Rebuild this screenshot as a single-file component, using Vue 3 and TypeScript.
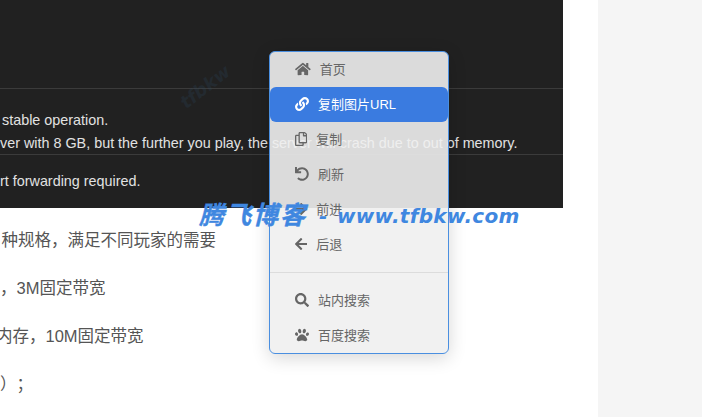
<script setup lang="ts">
interface Item { label: string; vb: string; d: string; active?: boolean; divider?: boolean }
const items: Item[] = [
  { label: '首页', vb: '0 0 576 512', d: 'M280.37 148.26L96 300.11V464a16 16 0 0 0 16 16l112.06-.29a16 16 0 0 0 15.92-16V368a16 16 0 0 1 16-16h64a16 16 0 0 1 16 16v95.64a16 16 0 0 0 16 16.05L464 480a16 16 0 0 0 16-16V300L295.67 148.26a12.19 12.19 0 0 0-15.3 0zM571.6 251.47L488 182.56V44.05a12 12 0 0 0-12-12h-56a12 12 0 0 0-12 12v72.61L318.47 43a48 48 0 0 0-61 0L4.34 251.47a12 12 0 0 0-1.6 16.9l25.5 31A12 12 0 0 0 45.15 301l235.22-193.74a12.19 12.19 0 0 1 15.3 0L530.9 301a12 12 0 0 0 16.9-1.6l25.5-31a12 12 0 0 0-1.7-16.93z' },
  { label: '复制图片URL', active: true, vb: '0 0 512 512', d: 'M326.612 185.391c59.747 59.809 58.927 155.698.36 214.59-.11.12-.24.25-.36.37l-67.2 67.2c-59.27 59.27-155.699 59.262-214.96 0-59.27-59.26-59.27-155.7 0-214.96l37.106-37.106c9.84-9.84 26.786-3.3 27.294 10.606.648 17.722 3.826 35.527 9.69 52.721 1.986 5.822.567 12.262-3.783 16.612l-13.087 13.087c-28.026 28.026-28.905 73.66-1.155 101.96 28.024 28.579 74.086 28.749 102.325.51l67.2-67.19c28.191-28.191 28.073-73.757 0-101.83-3.701-3.694-7.429-6.564-10.341-8.569a16.037 16.037 0 0 1-6.947-12.606c-.396-10.567 3.348-21.456 11.698-29.806l21.054-21.055c5.521-5.521 14.182-6.199 20.584-1.731a152.482 152.482 0 0 1 20.522 17.197zM467.547 44.449c-59.261-59.262-155.69-59.27-214.96 0l-67.2 67.2c-.12.12-.25.25-.36.37-58.566 58.892-59.387 154.781.36 214.59a152.454 152.454 0 0 0 20.521 17.196c6.402 4.468 15.064 3.789 20.584-1.731l21.054-21.055c8.35-8.35 12.094-19.239 11.698-29.806a16.037 16.037 0 0 0-6.947-12.606c-2.912-2.005-6.64-4.875-10.341-8.569-28.073-28.073-28.191-73.639 0-101.83l67.2-67.19c28.239-28.239 74.3-28.069 102.325.51 27.75 28.3 26.872 73.934-1.155 101.96l-13.087 13.087c-4.35 4.35-5.769 10.79-3.783 16.612 5.864 17.194 9.042 34.999 9.69 52.721.509 13.906 17.454 20.446 27.294 10.606l37.106-37.106c59.271-59.259 59.271-155.699.001-214.959z' },
  { label: '复制', vb: '0 0 448 512', d: 'M433.941 65.941l-51.882-51.882A48 48 0 0 0 348.118 0H176c-26.51 0-48 21.49-48 48v48H48c-26.51 0-48 21.49-48 48v320c0 26.51 21.49 48 48 48h224c26.51 0 48-21.49 48-48v-48h80c26.51 0 48-21.49 48-48V99.882a48 48 0 0 0-14.059-33.941zM266 464H54a6 6 0 0 1-6-6V150a6 6 0 0 1 6-6h74v224c0 26.51 21.49 48 48 48h96v42a6 6 0 0 1-6 6zm128-96H182a6 6 0 0 1-6-6V54a6 6 0 0 1 6-6h106v88c0 13.255 10.745 24 24 24h88v202a6 6 0 0 1-6 6zm6-256h-64V48h9.632c1.591 0 3.117.632 4.243 1.757l48.368 48.368a6 6 0 0 1 1.757 4.243V112z' },
  { label: '刷新', vb: '0 0 512 512', d: 'M212.333 224.333H12c-6.627 0-12-5.373-12-12V12C0 5.373 5.373 0 12 0h48c6.627 0 12 5.373 12 12v78.112C117.773 39.279 184.26 7.47 258.175 8.007c136.906.994 246.448 111.623 246.157 248.532C504.041 393.258 393.12 504 256.333 504c-64.089 0-122.496-24.313-166.51-64.215-5.099-4.622-5.334-12.554-.467-17.42l33.967-33.967c4.474-4.474 11.662-4.717 16.401-.525C170.76 415.336 211.58 432 256.333 432c97.268 0 176-78.716 176-176 0-97.267-78.716-176-176-176-58.496 0-110.28 28.476-142.274 72.333h98.274c6.627 0 12 5.373 12 12v48c0 6.627-5.373 12-12 12z' },
  { label: '前进', vb: '0 0 448 512', d: 'M190.5 66.9l22.2-22.2c9.4-9.4 24.6-9.4 33.9 0L441 239c9.4 9.4 9.4 24.6 0 33.9L246.6 467.3c-9.4 9.4-24.6 9.4-33.9 0l-22.2-22.2c-9.5-9.5-9.3-25 .4-34.3L311.4 296H24c-13.3 0-24-10.7-24-24v-32c0-13.3 10.7-24 24-24h287.4L190.9 101.2c-9.8-9.3-10-24.8-.4-34.3z' },
  { label: '后退', vb: '0 0 448 512', divider: true, d: 'M257.5 445.1l-22.2 22.2c-9.4 9.4-24.6 9.4-33.9 0L7 273c-9.4-9.4-9.4-24.6 0-33.9L201.4 44.7c9.4-9.4 24.6-9.4 33.9 0l22.2 22.2c9.5 9.5 9.3 25-.4 34.3L136.6 216H424c13.3 0 24 10.7 24 24v32c0 13.3-10.7 24-24 24H136.6l120.5 114.8c9.8 9.3 10 24.8.4 34.3z' },
  { label: '站内搜索', vb: '0 0 512 512', d: 'M505 442.7L405.3 343c-4.5-4.5-10.6-7-17-7H372c27.6-35.3 44-79.7 44-128C416 93.1 322.9 0 208 0S0 93.1 0 208s93.1 208 208 208c48.3 0 92.7-16.4 128-44v16.3c0 6.4 2.5 12.5 7 17l99.7 99.7c9.4 9.4 24.6 9.4 33.9 0l28.3-28.3c9.4-9.4 9.4-24.6.1-34zM208 336c-70.7 0-128-57.2-128-128 0-70.7 57.2-128 128-128 70.7 0 128 57.2 128 128 0 70.7-57.2 128-128 128z' },
  { label: '百度搜索', vb: '0 0 512 512', d: 'M256 224c-79.41 0-192 122.76-192 200.25 0 34.9 26.81 55.75 71.74 55.75 48.84 0 81.09-25.08 120.26-25.08 39.51 0 71.85 25.08 120.26 25.08 44.93 0 71.74-20.85 71.74-55.75C448 346.76 335.41 224 256 224zm-147.28-12.61c-10.4-34.65-42.44-57.09-71.56-50.13-29.12 6.96-44.29 40.69-33.89 75.34 10.4 34.65 42.44 57.09 71.56 50.13 29.12-6.96 44.29-40.69 33.89-75.34zm84.72-20.78c30.94-8.14 46.42-49.94 34.58-93.36s-46.52-72.01-77.46-63.87-46.42 49.94-34.58 93.36c11.84 43.42 46.52 72.01 77.46 63.87zm281.39-29.34c-29.12-6.96-61.15 15.48-71.56 50.13-10.4 34.65 4.77 68.38 33.89 75.34 29.12 6.96 61.15-15.48 71.56-50.13 10.4-34.65-4.77-68.38-33.89-75.34zm-156.27 29.34c30.94 8.14 65.62-20.45 77.46-63.87 11.84-43.42-3.64-85.21-34.58-93.36s-65.62 20.45-77.46 63.87c-11.84 43.42 3.64 85.22 34.58 93.36z' },
]
const paragraphs = ['种规格，满足不同玩家的需要', '，3M固定带宽', '内存，10M固定带宽', '）；']
</script>

<template>
  <div class="page">
    <main class="main">
      <section class="terminal">
        <div class="row-top"></div>
        <div class="row-mid">
          <p class="stable">stable operation.</p>
          <p>ver with 8 GB, but the further you play, the server will crash due to out of memory.</p>
        </div>
        <div class="row-end">
          <p>rt forwarding required.</p>
        </div>
        <span class="faint">tfbkw</span>
      </section>
      <article class="article">
        <p v-for="p in paragraphs" :key="p">{{ p }}</p>
      </article>
    </main>
    <aside class="aside"></aside>

    <nav class="menu">
      <template v-for="item in items" :key="item.label">
        <div class="item" :class="{ active: item.active }">
          <svg class="icon" :viewBox="item.vb"><path :d="item.d" fill="currentColor" /></svg>
          <span>{{ item.label }}</span>
        </div>
        <div v-if="item.divider" class="divider"></div>
      </template>
    </nav>

    <div class="watermark"><span class="wm-cn">腾飞博客</span><span class="wm-en">- www.tfbkw.com</span></div>
  </div>
</template>

<style>
html, body { margin: 0; background: #fff; }
</style>

<style scoped>
.page {
  position: relative;
  display: flex;
  width: 702px;
  height: 417px;
  overflow: hidden;
  background: #fff;
  font-family: "Liberation Sans", "Noto Sans CJK SC", sans-serif;
}
.main { width: 598px; flex: none; overflow: hidden; }
.aside { flex: 1; background: #f5f5f5; }
.terminal {
  position: relative;
  width: 563px;
  height: 208px;
  background: #212121;
  color: #e2e2e2;
  font-size: 14.36px;
  line-height: 23px;
  overflow: hidden;
}
.terminal p { margin: 0; white-space: nowrap; }
.row-top { height: 88px; border-bottom: 1px solid #3b3b3b; }
.row-mid { height: 66px; padding-top: 20px; box-sizing: border-box; border-bottom: 1px solid #3b3b3b; }
.stable { padding-left: 2px; }
.row-end { padding-top: 15px; }
.faint {
  position: absolute;
  left: 176px;
  top: 76px;
  color: #2d4a66;
  opacity: .22;
  font: italic bold 18px "DejaVu Sans", sans-serif;
  transform: rotate(-38deg);
}
.article { color: #555; font-size: 16.5px; padding-top: 8px; text-spacing-trim: space-all; }
.article p { margin: 0; height: 48px; line-height: 48px; white-space: nowrap; }
.article p:nth-child(1) { text-indent: 1.5px; }
.article p:nth-child(3) { text-indent: -4px; }
.menu {
  position: absolute;
  left: 269px;
  top: 51px;
  width: 180px;
  box-sizing: border-box;
  border: 1px solid #4a8fe0;
  border-radius: 6px;
  background: rgba(240, 240, 240, .9);
  box-shadow: 0 4px 18px rgba(0, 0, 0, .16);
  color: #666;
  font-size: 13px;
}
.item {
  display: flex;
  align-items: center;
  gap: 9px;
  height: 35px;
  box-sizing: border-box;
  padding: 0 0 2px 25px;
  border-radius: 6px;
}
.item.active { background: #3a7be0; color: #fff; }
.icon { height: 14px; width: auto; flex: none; }
.divider { height: 1px; margin: 10px 0; background: #dcdcdc; }
.watermark {
  position: absolute;
  left: 199px;
  top: 202px;
  display: flex;
  align-items: center;
  color: #3f87e0;
  font-family: "DejaVu Sans", "Noto Sans CJK SC", sans-serif;
  font-style: italic;
  font-weight: 700;
  line-height: 28px;
  white-space: nowrap;
}
.wm-cn { font-size: 25px; letter-spacing: 2px; -webkit-text-stroke: .4px #3f87e0; }
.wm-en { font-size: 20px; word-spacing: 2px; letter-spacing: .3px; margin-left: 12px; }
</style>
